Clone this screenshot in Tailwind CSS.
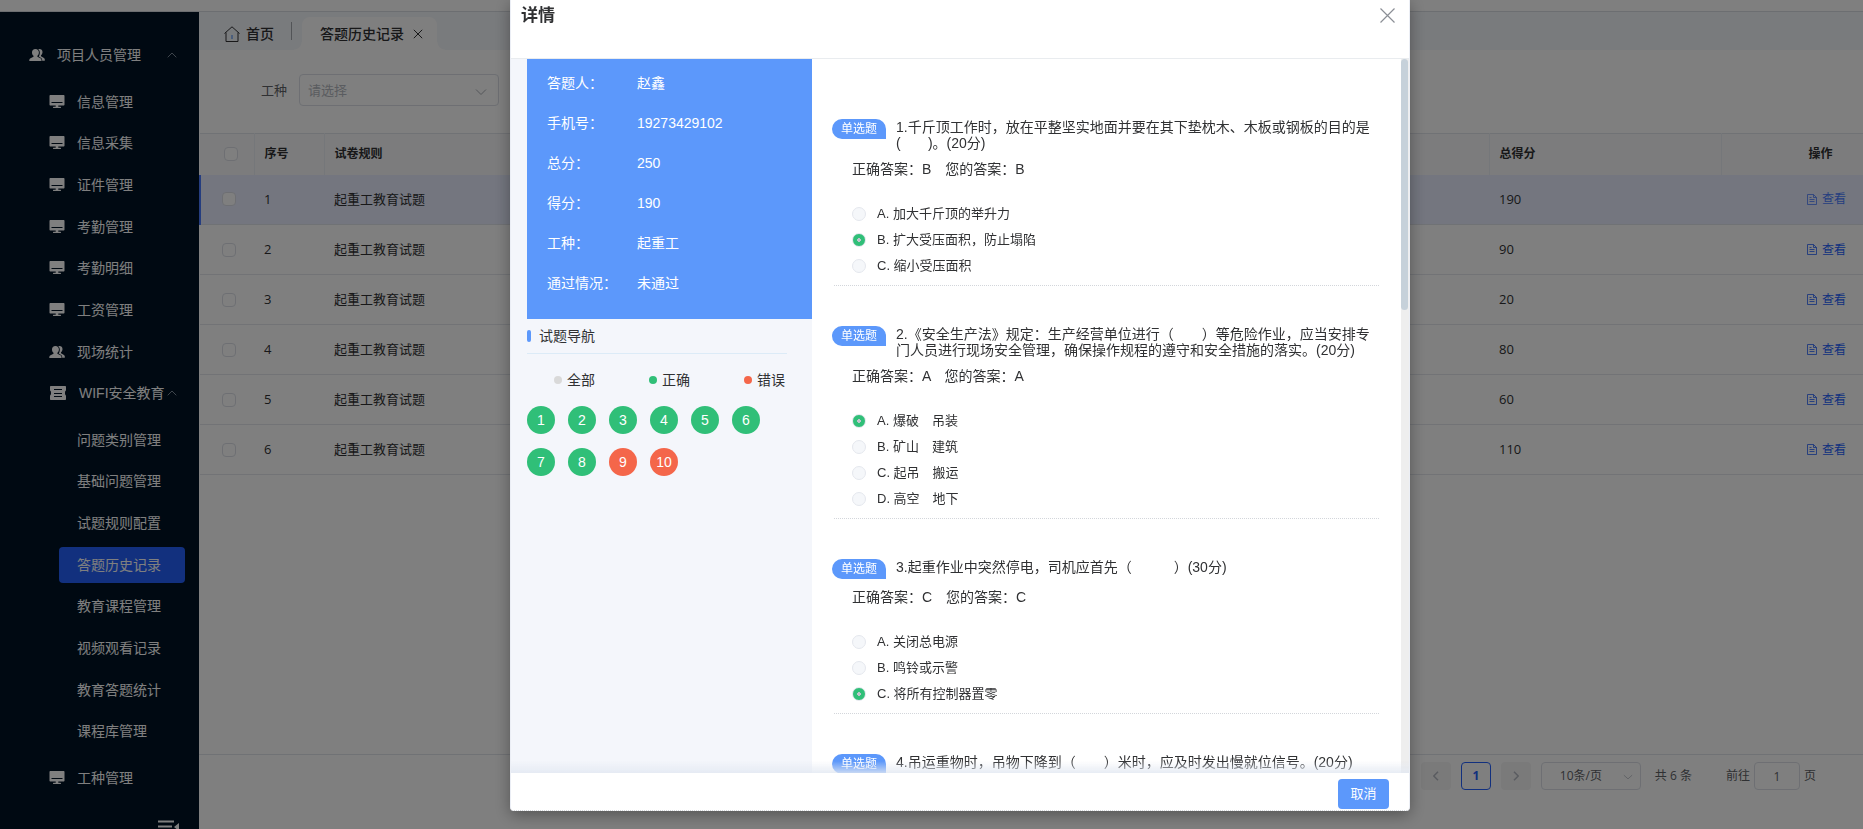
<!DOCTYPE html>
<html lang="zh-CN">
<head>
<meta charset="utf-8">
<title>答题历史记录</title>
<script src="https://cdn.jsdelivr.net/npm/@tailwindcss/browser@4"></script>
</head>
<body class="h-screen overflow-hidden bg-white font-['Liberation_Sans','Noto_Sans_CJK_SC',sans-serif] text-sm text-[#303133]">
<svg class="hidden" aria-hidden="true">
  <symbol id="users" viewBox="0 0 16 14"><path fill="currentColor" d="M6.400 1c2.200 0 3.500 1.300 3.500 3.400 0 1.500-.7 2.700-1.500 3.400v.9l3 1.500c.8.400 1.100 1 1.100 1.900v.8H.3v-.8c0-.9.4-1.500 1.200-1.900l3-1.500v-.9C3.600 7.100 3 5.900 3 4.400 3 2.300 4.300 1 6.400 1z"/><path fill="currentColor" d="M9.300 1.200c2.400-.6 4.200.6 4.200 2.900 0 1.400-.7 2.600-1.500 3.200v.9l2.600 1.500c.8.500 1.200 1 1.200 1.900v1.100h-2.600c0-1.600-.5-2.400-1.500-2.900L9.700 8.500c.7-.9 1.100-2.300 1.100-3.800 0-1.500-.5-2.700-1.500-3.500z"/></symbol>
  <symbol id="monitor" viewBox="0 0 16 14"><path fill="currentColor" fill-rule="evenodd" d="M1.500 0h13c.6 0 1 .4 1 1v8.500c0 .6-.4 1-1 1H9.300v1.300h1.900c.5 0 .8.500.8 1.200H4c0-.7.300-1.200.8-1.200h1.900v-1.300H1.500c-.6 0-1-.4-1-1V1c0-.6.400-1 1-1zM2.500 7v1h11V7z"/></symbol>
  <symbol id="ticket" viewBox="0 0 16 14"><path fill="currentColor" fill-rule="evenodd" d="M1 0h14c.6 0 1 .4 1 1v3.500c-.7.300-1 1.200-1 2.500s.3 2.200 1 2.500V13c0 .6-.4 1-1 1H1c-.6 0-1-.4-1-1V9.500c.7-.3 1-1.200 1-2.500s-.3-2.200-1-2.500V1c0-.6.400-1 1-1zM4 3v1h8V3zM4 7v1h8V7zM4 10v1h8v-1z"/></symbol>
  <symbol id="up" viewBox="0 0 10 6"><path fill="none" stroke="currentColor" d="M.7 5.300 5 1l4.300 4.300"/></symbol>
  <symbol id="down" viewBox="0 0 12 8"><path fill="none" stroke="currentColor" d="M1 1.500 6 6.500l5-5"/></symbol>
  <symbol id="doc" viewBox="0 0 12 13"><path fill="none" stroke="currentColor" stroke-width=".8" d="M1.500 1.500h6l3 3v7h-9zM7.500 1.500v3h3M3.500 4.500h2M3.500 6.500h5M3.500 8.500h5"/></symbol>
</svg>

<div class="flex h-full flex-col">
  <div class="h-3 shrink-0 border-b border-[#d8dce2]"></div>
  <div class="flex min-h-0 flex-1">
    <nav class="flex w-[199px] shrink-0 flex-col overflow-hidden bg-[#001224] pt-[22px] text-white">
      <a href="#" class="flex h-[42px] shrink-0 items-center pl-[29px] pr-[22px]"><svg class="mr-3 h-3.5 w-4"><use href="#users"/></svg>项目人员管理<svg class="ml-auto h-1.5 w-2.5 text-[#7d8a98]"><use href="#up"/></svg></a>
      <ul class="mt-[5px] flex h-[333px] shrink-0 flex-col">
        <li class="flex-1"><a href="#" class="flex h-full items-center pl-[49px]"><svg class="mr-3 h-3.5 w-4"><use href="#monitor"/></svg>信息管理</a></li>
        <li class="flex-1"><a href="#" class="flex h-full items-center pl-[49px]"><svg class="mr-3 h-3.5 w-4"><use href="#monitor"/></svg>信息采集</a></li>
        <li class="flex-1"><a href="#" class="flex h-full items-center pl-[49px]"><svg class="mr-3 h-3.5 w-4"><use href="#monitor"/></svg>证件管理</a></li>
        <li class="flex-1"><a href="#" class="flex h-full items-center pl-[49px]"><svg class="mr-3 h-3.5 w-4"><use href="#monitor"/></svg>考勤管理</a></li>
        <li class="flex-1"><a href="#" class="flex h-full items-center pl-[49px]"><svg class="mr-3 h-3.5 w-4"><use href="#monitor"/></svg>考勤明细</a></li>
        <li class="flex-1"><a href="#" class="flex h-full items-center pl-[49px]"><svg class="mr-3 h-3.5 w-4"><use href="#monitor"/></svg>工资管理</a></li>
        <li class="flex-1"><a href="#" class="flex h-full items-center pl-[49px]"><svg class="mr-3 h-3.5 w-4"><use href="#users"/></svg>现场统计</a></li>
        <li class="flex-1"><a href="#" class="flex h-full items-center pl-[50px] pr-[22px]"><svg class="mr-[13px] h-3.5 w-4 shrink-0"><use href="#ticket"/></svg><span class="whitespace-nowrap">WIFI安全教育</span><svg class="ml-auto h-1.5 w-2.5 text-[#7d8a98]"><use href="#up"/></svg></a></li>
      </ul>
      <ul class="mt-[5px] flex h-[333px] shrink-0 flex-col pl-[59px] pr-[14px]">
        <li class="flex-1 py-[3px]"><a href="#" class="flex h-full items-center pl-[18px]">问题类别管理</a></li>
        <li class="flex-1 py-[3px]"><a href="#" class="flex h-full items-center pl-[18px]">基础问题管理</a></li>
        <li class="flex-1 py-[3px]"><a href="#" class="flex h-full items-center pl-[18px]">试题规则配置</a></li>
        <li class="flex-1 py-[3px]"><a href="#" class="flex h-full items-center rounded bg-[#2461fc] pl-[18px]">答题历史记录</a></li>
        <li class="flex-1 py-[3px]"><a href="#" class="flex h-full items-center pl-[18px]">教育课程管理</a></li>
        <li class="flex-1 py-[3px]"><a href="#" class="flex h-full items-center pl-[18px]">视频观看记录</a></li>
        <li class="flex-1 py-[3px]"><a href="#" class="flex h-full items-center pl-[18px]">教育答题统计</a></li>
        <li class="flex-1 py-[3px]"><a href="#" class="flex h-full items-center pl-[18px]">课程库管理</a></li>
      </ul>
      <a href="#" class="mt-[5px] flex h-[42px] shrink-0 items-center pl-[49px]"><svg class="mr-3 h-3.5 w-4"><use href="#monitor"/></svg>工种管理</a>
      <button type="button" aria-label="收起菜单" class="mr-5 mt-5 shrink-0 self-end"><svg class="block h-4 w-[21px]" viewBox="0 0 21 16"><path fill="currentColor" d="M0 1.500h16v2H0zM0 6.500h14v2H0zM0 11.500h16v2H0zM21 4v8l-5-4z"/></svg></button>
    </nav>

    <main class="flex min-w-0 flex-1 flex-col font-['Open_Sans','Noto_Sans_CJK_SC',sans-serif]">
      <div class="flex h-[38px] shrink-0 bg-[#f3f6fa] text-[#303133]">
        <a href="#" class="flex w-[92px] items-center pl-[25px] pt-[5px] font-medium"><svg class="mr-1.5 h-4 w-4" viewBox="0 0 16 16" fill="none" stroke="currentColor"><path d="M.5 7.500 8 .8l7.500 6.700M2 6.500v9h12v-9"/><path stroke="#3b82f6" d="M8 9v4"/></svg>首页</a>
        <div class="my-2.5 mr-0.5 w-px bg-[#a4a8ae]"></div>
        <div class="flex items-end pt-[5px]">
          <span class="h-2 w-2 bg-[radial-gradient(circle_at_0_0,transparent_7px,#fff_8px)]"></span>
          <div class="flex h-full items-center rounded-t-lg bg-white pl-[18px] pr-[14px] font-medium">答题历史记录<button type="button" aria-label="关闭标签" class="ml-[9px]"><svg class="block h-2.5 w-2.5" viewBox="0 0 10 10" stroke="currentColor"><path d="M.8.8l8.400 8.400M9.200.8.800 9.200"/></svg></button></div>
          <span class="h-2 w-2 bg-[radial-gradient(circle_at_100%_0,transparent_7px,#fff_8px)]"></span>
        </div>
      </div>

      <div class="flex h-[83px] shrink-0 items-center pb-[3px] pl-[62px] text-[13px]">
        <label for="job" class="mr-3 text-[#606266]">工种</label>
        <div class="relative w-[200px]">
          <select id="job" class="h-8 w-full appearance-none rounded border border-[#dcdfe6] bg-white px-2 text-[#b4b8c0]"><option>请选择</option></select>
          <svg class="pointer-events-none absolute right-3 top-3.5 h-2 w-3 text-[#a8abb2]"><use href="#down"/></svg>
        </div>
      </div>

      <div class="min-h-0 flex-1 overflow-hidden">
        <table class="w-full table-fixed border-collapse text-left text-[13px]">
          <colgroup><col class="w-[54px]"><col class="w-[70px]"><col><col class="w-[232px]"><col class="w-[142px]"></colgroup>
          <thead class="bg-[#f8f9fb] text-xs text-[#303133]">
            <tr class="h-[41px] border-t border-[#e1e4ea]">
              <th class="border-r border-[#ebeef5] pl-6"><input type="checkbox" aria-label="全选" class="block h-3.5 w-3.5 appearance-none rounded-sm border border-[#dcdfe6] bg-white"></th>
              <th class="border-r border-[#ebeef5] pl-2.5 font-bold">序号</th>
              <th class="border-r border-[#ebeef5] pl-2.5 font-bold">试卷规则</th>
              <th class="border-r border-[#ebeef5] pl-2.5 font-bold">总得分</th>
              <th class="pl-[87px] font-bold">操作</th>
            </tr>
          </thead>
          <tbody>
            <tr class="h-[50px] border-b border-[#e1e4ea] bg-[#e8edff]">
              <td class="border-l-2 border-[#4a7bff] pl-[21px]"><input type="checkbox" aria-label="选择 1" class="block h-3.5 w-3.5 appearance-none rounded-sm border border-[#dcdfe6] bg-white"></td><td class="pl-2.5">1</td><td class="pl-2.5">起重工教育试题</td><td class="pl-2.5">190</td>
              <td class="pl-[85px] text-xs"><a href="#" class="flex items-center gap-1 text-[#4a7bff]"><svg class="h-[13px] w-3"><use href="#doc"/></svg>查看</a></td>
            </tr>
            <tr class="h-[50px] border-b border-[#e4e7ed]">
              <td class="pl-[22px]"><input type="checkbox" aria-label="选择 2" class="block h-3.5 w-3.5 appearance-none rounded-sm border border-[#dcdfe6] bg-white"></td><td class="pl-2.5">2</td><td class="pl-2.5">起重工教育试题</td><td class="pl-2.5">90</td>
              <td class="pl-[85px] text-xs"><a href="#" class="flex items-center gap-1 text-[#2461fc]"><svg class="h-[13px] w-3"><use href="#doc"/></svg>查看</a></td>
            </tr>
            <tr class="h-[50px] border-b border-[#e4e7ed]">
              <td class="pl-[22px]"><input type="checkbox" aria-label="选择 3" class="block h-3.5 w-3.5 appearance-none rounded-sm border border-[#dcdfe6] bg-white"></td><td class="pl-2.5">3</td><td class="pl-2.5">起重工教育试题</td><td class="pl-2.5">20</td>
              <td class="pl-[85px] text-xs"><a href="#" class="flex items-center gap-1 text-[#2461fc]"><svg class="h-[13px] w-3"><use href="#doc"/></svg>查看</a></td>
            </tr>
            <tr class="h-[50px] border-b border-[#e4e7ed]">
              <td class="pl-[22px]"><input type="checkbox" aria-label="选择 4" class="block h-3.5 w-3.5 appearance-none rounded-sm border border-[#dcdfe6] bg-white"></td><td class="pl-2.5">4</td><td class="pl-2.5">起重工教育试题</td><td class="pl-2.5">80</td>
              <td class="pl-[85px] text-xs"><a href="#" class="flex items-center gap-1 text-[#2461fc]"><svg class="h-[13px] w-3"><use href="#doc"/></svg>查看</a></td>
            </tr>
            <tr class="h-[50px] border-b border-[#e4e7ed]">
              <td class="pl-[22px]"><input type="checkbox" aria-label="选择 5" class="block h-3.5 w-3.5 appearance-none rounded-sm border border-[#dcdfe6] bg-white"></td><td class="pl-2.5">5</td><td class="pl-2.5">起重工教育试题</td><td class="pl-2.5">60</td>
              <td class="pl-[85px] text-xs"><a href="#" class="flex items-center gap-1 text-[#2461fc]"><svg class="h-[13px] w-3"><use href="#doc"/></svg>查看</a></td>
            </tr>
            <tr class="h-[50px] border-b border-[#e4e7ed]">
              <td class="pl-[22px]"><input type="checkbox" aria-label="选择 6" class="block h-3.5 w-3.5 appearance-none rounded-sm border border-[#dcdfe6] bg-white"></td><td class="pl-2.5">6</td><td class="pl-2.5">起重工教育试题</td><td class="pl-2.5">110</td>
              <td class="pl-[85px] text-xs"><a href="#" class="flex items-center gap-1 text-[#2461fc]"><svg class="h-[13px] w-3"><use href="#doc"/></svg>查看</a></td>
            </tr>
          </tbody>
        </table>
      </div>

      <div class="flex h-[75px] shrink-0 items-start justify-end border-t border-[#e1e4ea] pr-[47px] pt-[7px] text-xs text-[#606266]">
        <div class="flex h-7 items-center">
          <button type="button" disabled aria-label="上一页" class="mr-2.5 flex h-7 w-[30px] items-center justify-center rounded-sm bg-[#f4f4f5] text-[#b4b8c0]"><svg class="h-2.5 w-1.5" viewBox="0 0 6 10" fill="none" stroke="currentColor" stroke-width="1.500"><path d="M5 .8.800 5 5 9.200"/></svg></button>
          <button type="button" class="mr-2.5 h-7 w-[30px] rounded-sm border border-[#2461fc] font-bold text-[#2461fc]">1</button>
          <button type="button" disabled aria-label="下一页" class="mr-2.5 flex h-7 w-[30px] items-center justify-center rounded-sm bg-[#f4f4f5] text-[#b4b8c0]"><svg class="h-2.5 w-1.5" viewBox="0 0 6 10" fill="none" stroke="currentColor" stroke-width="1.500"><path d="m1 .8 4.200 4.200L1 9.200"/></svg></button>
          <div class="relative mr-3.5 w-[100px]">
            <select aria-label="每页条数" class="h-7 w-full appearance-none rounded border border-[#dcdfe6] bg-white pl-[18px]"><option>10条/页</option></select>
            <svg class="pointer-events-none absolute right-2 top-3 h-1.5 w-2.5 text-[#b4b8c0]" viewBox="0 0 12 8" preserveAspectRatio="none"><use href="#down"/></svg>
          </div>
          <span class="mr-[34px]">共 6 条</span>
          <label for="jump" class="mr-1">前往</label>
          <input id="jump" value="1" class="mr-1 h-7 w-[46px] rounded border border-[#dcdfe6] text-center">
          <span>页</span>
        </div>
      </div>
    </main>
  </div>
</div>

<div class="fixed inset-0 flex justify-center bg-black/50 pb-[18px] pl-[57px]">
  <div role="dialog" aria-labelledby="dlg-title" class="flex w-[900px] flex-col overflow-hidden rounded-b-sm border-x border-[#ebeef5] bg-white shadow-[0_4px_16px_rgba(0,0,0,0.35)]">
    <header class="flex h-[59px] shrink-0 items-start justify-between border-b border-[#e9ecef] pl-2.5 pr-3.5 pt-1">
      <h2 id="dlg-title" class="text-[17px] font-bold leading-6">详情</h2>
      <button type="button" aria-label="关闭" class="pt-1 text-[#8b8f96]"><svg class="block h-[15px] w-[15px]" viewBox="0 0 15 15" stroke="currentColor" stroke-width="1.200"><path d="m.5.5 14 14M14.500.5l-14 14"/></svg></button>
    </header>
    <div class="relative flex min-h-0 flex-1 overflow-hidden">
      <aside class="w-[301px] shrink-0 bg-[#f4f6fb] pl-4">
        <dl class="grid h-[260px] grid-cols-[90px_1fr] content-start bg-[#5c98fb] pl-5 pt-1 leading-10 text-white">
          <dt>答题人：</dt><dd>赵鑫</dd>
          <dt>手机号：</dt><dd>19273429102</dd>
          <dt>总分：</dt><dd>250</dd>
          <dt>得分：</dt><dd>190</dd>
          <dt>工种：</dt><dd>起重工</dd>
          <dt>通过情况：</dt><dd>未通过</dd>
        </dl>
        <div class="mr-[25px] flex h-[35px] items-center border-b border-[#dcebf7]"><span class="mr-2 h-3 w-1 rounded-sm bg-[#5c98fb]"></span><h3>试题导航</h3></div>
        <div class="mt-4 flex gap-[54px] pl-[27px] leading-5">
          <span class="flex items-center gap-[5px]"><i class="h-2 w-2 rounded-full bg-[#d9d9d9]"></i>全部</span>
          <span class="flex items-center gap-[5px]"><i class="h-2 w-2 rounded-full bg-[#30bf78]"></i>正确</span>
          <span class="flex items-center gap-[5px]"><i class="h-2 w-2 rounded-full bg-[#f4664a]"></i>错误</span>
        </div>
        <div class="mt-4 flex flex-wrap gap-x-[13px] gap-y-3.5 pr-5 text-white">
          <button type="button" class="h-7 w-7 rounded-full bg-[#30bf78]">1</button>
          <button type="button" class="h-7 w-7 rounded-full bg-[#30bf78]">2</button>
          <button type="button" class="h-7 w-7 rounded-full bg-[#30bf78]">3</button>
          <button type="button" class="h-7 w-7 rounded-full bg-[#30bf78]">4</button>
          <button type="button" class="h-7 w-7 rounded-full bg-[#30bf78]">5</button>
          <button type="button" class="h-7 w-7 rounded-full bg-[#30bf78]">6</button>
          <button type="button" class="h-7 w-7 rounded-full bg-[#30bf78]">7</button>
          <button type="button" class="h-7 w-7 rounded-full bg-[#30bf78]">8</button>
          <button type="button" class="h-7 w-7 rounded-full bg-[#f4664a]">9</button>
          <button type="button" class="h-7 w-7 rounded-full bg-[#f4664a]">10</button>
        </div>
      </aside>

      <div class="min-w-0 flex-1 overflow-hidden px-5 pt-5 [text-spacing-trim:space-all]">
        <section class="pt-10">
          <div class="flex items-start gap-2.5 pr-2.5 leading-4">
            <span class="h-5 w-[54px] shrink-0 rounded-[10px] rounded-br-none bg-[#5c98fb] text-center text-xs leading-5 text-white">单选题</span>
            <p>1.千斤顶工作时，放在平整坚实地面并要在其下垫枕木、木板或钢板的目的是(&nbsp;&nbsp;&nbsp;&nbsp;&nbsp;&nbsp;&nbsp;)。(20分)</p>
          </div>
          <p class="mt-2 pl-5 leading-5">正确答案：B　您的答案：B</p>
          <div class="mt-[22px] pl-5 text-[13px]">
            <label class="flex h-[26px] items-center gap-[11px]"><input type="radio" name="q1" class="h-3.5 w-3.5 appearance-none rounded-full border border-[#e4e7ed] bg-[#f5f7fa] checked:bg-[radial-gradient(circle,#c0c4cc_2px,#30bf78_2px)]">A. 加大千斤顶的举升力</label>
            <label class="flex h-[26px] items-center gap-[11px]"><input type="radio" name="q1" checked class="h-3.5 w-3.5 appearance-none rounded-full border border-[#e4e7ed] bg-[#f5f7fa] checked:bg-[radial-gradient(circle,#c0c4cc_2px,#30bf78_2px)]">B. 扩大受压面积，防止塌陷</label>
            <label class="flex h-[26px] items-center gap-[11px]"><input type="radio" name="q1" class="h-3.5 w-3.5 appearance-none rounded-full border border-[#e4e7ed] bg-[#f5f7fa] checked:bg-[radial-gradient(circle,#c0c4cc_2px,#30bf78_2px)]">C. 缩小受压面积</label>
          </div>
          <hr class="mx-0.5 mt-1.5 border-t border-dotted border-[#d3d6db]">
        </section>
        <section class="pt-10">
          <div class="flex items-start gap-2.5 pr-2.5 leading-4">
            <span class="h-5 w-[54px] shrink-0 rounded-[10px] rounded-br-none bg-[#5c98fb] text-center text-xs leading-5 text-white">单选题</span>
            <p>2.《安全生产法》规定：生产经营单位进行（　　）等危险作业，应当安排专门人员进行现场安全管理，确保操作规程的遵守和安全措施的落实。(20分)</p>
          </div>
          <p class="mt-2 pl-5 leading-5">正确答案：A　您的答案：A</p>
          <div class="mt-[22px] pl-5 text-[13px]">
            <label class="flex h-[26px] items-center gap-[11px]"><input type="radio" name="q2" checked class="h-3.5 w-3.5 appearance-none rounded-full border border-[#e4e7ed] bg-[#f5f7fa] checked:bg-[radial-gradient(circle,#c0c4cc_2px,#30bf78_2px)]">A. 爆破　吊装</label>
            <label class="flex h-[26px] items-center gap-[11px]"><input type="radio" name="q2" class="h-3.5 w-3.5 appearance-none rounded-full border border-[#e4e7ed] bg-[#f5f7fa] checked:bg-[radial-gradient(circle,#c0c4cc_2px,#30bf78_2px)]">B. 矿山　建筑</label>
            <label class="flex h-[26px] items-center gap-[11px]"><input type="radio" name="q2" class="h-3.5 w-3.5 appearance-none rounded-full border border-[#e4e7ed] bg-[#f5f7fa] checked:bg-[radial-gradient(circle,#c0c4cc_2px,#30bf78_2px)]">C. 起吊　搬运</label>
            <label class="flex h-[26px] items-center gap-[11px]"><input type="radio" name="q2" class="h-3.5 w-3.5 appearance-none rounded-full border border-[#e4e7ed] bg-[#f5f7fa] checked:bg-[radial-gradient(circle,#c0c4cc_2px,#30bf78_2px)]">D. 高空　地下</label>
          </div>
          <hr class="mx-0.5 mt-1.5 border-t border-dotted border-[#d3d6db]">
        </section>
        <section class="pt-10">
          <div class="flex items-start gap-2.5 pr-2.5 leading-4">
            <span class="h-5 w-[54px] shrink-0 rounded-[10px] rounded-br-none bg-[#5c98fb] text-center text-xs leading-5 text-white">单选题</span>
            <p>3.起重作业中突然停电，司机应首先（　　　）(30分)</p>
          </div>
          <p class="mt-2 pl-5 leading-5">正确答案：C　您的答案：C</p>
          <div class="mt-[22px] pl-5 text-[13px]">
            <label class="flex h-[26px] items-center gap-[11px]"><input type="radio" name="q3" class="h-3.5 w-3.5 appearance-none rounded-full border border-[#e4e7ed] bg-[#f5f7fa] checked:bg-[radial-gradient(circle,#c0c4cc_2px,#30bf78_2px)]">A. 关闭总电源</label>
            <label class="flex h-[26px] items-center gap-[11px]"><input type="radio" name="q3" class="h-3.5 w-3.5 appearance-none rounded-full border border-[#e4e7ed] bg-[#f5f7fa] checked:bg-[radial-gradient(circle,#c0c4cc_2px,#30bf78_2px)]">B. 鸣铃或示警</label>
            <label class="flex h-[26px] items-center gap-[11px]"><input type="radio" name="q3" checked class="h-3.5 w-3.5 appearance-none rounded-full border border-[#e4e7ed] bg-[#f5f7fa] checked:bg-[radial-gradient(circle,#c0c4cc_2px,#30bf78_2px)]">C. 将所有控制器置零</label>
          </div>
          <hr class="mx-0.5 mt-1.5 border-t border-dotted border-[#d3d6db]">
        </section>
        <section class="pt-10">
          <div class="flex items-start gap-2.5 pr-2.5 leading-4">
            <span class="h-5 w-[54px] shrink-0 rounded-[10px] rounded-br-none bg-[#5c98fb] text-center text-xs leading-5 text-white">单选题</span>
            <p>4.吊运重物时，吊物下降到（　　）米时，应及时发出慢就位信号。(20分)</p>
          </div>
        </section>
      </div>

      <div class="w-2 shrink-0 bg-[#eeeeee]"><div class="h-[251px] w-[7px] rounded-full bg-[#c6d1da]"></div></div>
      <div class="pointer-events-none absolute inset-x-0 bottom-0 h-3 bg-linear-to-t from-[#e2e8f2]/80 to-transparent"></div>
    </div>
    <footer class="flex h-[38px] shrink-0 items-end justify-end border-b border-dotted border-[#d3d6db] pb-px pr-5">
      <button type="button" class="h-[30px] w-[51px] rounded-sm bg-[#5c98fb] text-[13px] text-white">取消</button>
    </footer>
  </div>
</div>
</body>
</html>
